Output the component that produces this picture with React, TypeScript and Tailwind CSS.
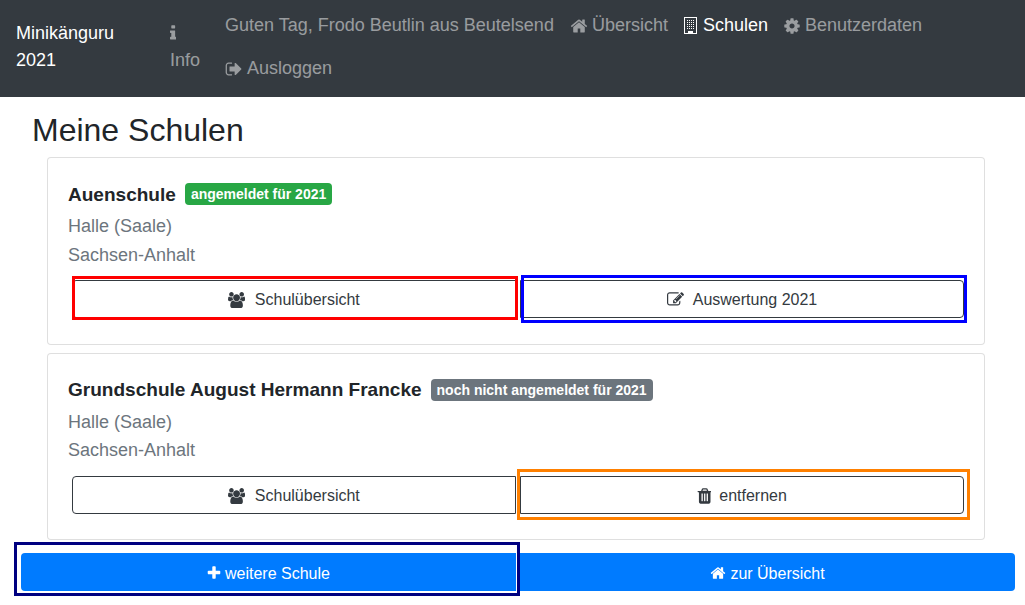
import React from 'react';

type IconProps = { d: string; w?: number; x?: number; size: number; className?: string };

const Icon: React.FC<IconProps> = ({ d, w = 1792, x = 0, size, className }) => (
  <svg viewBox={`${x} 0 ${w} 1792`} width={(size * w) / 1792} height={size} fill="currentColor" className={`inline-block shrink-0 ${className || ''}`}>
    <path d={d} />
  </svg>
);

const HOME = 'M1472 992v480q0 26-19 45t-45 19h-384v-384h-256v384h-384q-26 0-45-19t-19-45v-480q0-1 .5-3t.5-3l575-474 575 474q1 2 1 6zm223-69l-62 74q-8 9-21 11h-3q-13 0-21-7l-692-577-692 577q-12 8-24 7-13-2-21-11l-62-74q-8-10-7-23.500t11-21.500l719-599q32-26 76-26t76 26l244 204v-195q0-14 9-23t23-9h192q14 0 23 9t9 23v408l219 182q10 8 11 21.500t-7 23.500z';
const USERS = 'M593 896q-162 5-265 128h-134q-82 0-138-40.500t-56-118.500q0-353 124-353 6 0 43.500 21t97.500 42.500 119 21.500q67 0 133-23-5 37-5 66 0 139 81 256zm1071 637q0 120-73 189.500t-194 69.500h-874q-121 0-194-69.500t-73-189.500q0-53 3.500-103.500t14-109 26.500-108.500 43-97.500 62-81 85.500-53.500 111.500-20q10 0 43 21.500t73 48 107 48 135 21.500 135-21.500 107-48 73-48 43-21.500q61 0 111.500 20t85.500 53.500 62 81 43 97.500 26.500 108.500 14 109 3.500 103.500zm-1024-1277q0 106-75 181t-181 75-181-75-75-181 75-181 181-75 181 75 75 181zm704 384q0 159-112.500 271.500t-271.500 112.500-271.500-112.500-112.500-271.500 112.500-271.500 271.500-112.500 271.500 112.500 112.500 271.500zm576 225q0 78-56 118.500t-138 40.500h-134q-103-123-265-128 81-117 81-256 0-29-5-66 66 23 133 23 59 0 119-21.500t97.500-42.500 43.500-21q124 0 124 353zm-128-609q0 106-75 181t-181 75-181-75-75-181 75-181 181-75 181 75 75 181z';
const COG = 'M1152 896q0-106-75-181t-181-75-181 75-75 181 75 181 181 75 181-75 75-181zm512-109v222q0 12-8 23t-20 13l-185 28q-19 54-39 91 35 50 107 138 10 12 10 25t-9 23q-27 37-99 108t-94 71q-12 0-26-9l-138-108q-44 23-91 38-16 136-29 186-7 28-36 28h-222q-14 0-24.500-8.500t-11.500-21.500l-28-184q-49-16-90-37l-141 107q-10 9-25 9-14 0-25-11-126-114-165-168-7-10-7-23 0-12 8-23 15-21 51-66.500t54-70.500q-27-50-41-99l-183-27q-13-2-21-12.500t-8-23.500v-222q0-12 8-23t19-13l186-28q14-46 39-92-40-57-107-138-10-12-10-24 0-10 9-23 26-36 98.500-107.500t94.500-71.500q13 0 26 10l138 107q44-23 91-38 16-136 29-186 7-28 36-28h222q14 0 24.500 8.500t11.500 21.500l28 184q49 16 90 37l142-107q9-9 24-9 13 0 25 10 129 119 165 170 7 8 7 22 0 12-8 23-15 21-51 66.500t-54 70.500q26 50 41 98l183 28q13 2 21 12.500t8 23.500z';
const PLUS = 'M1600 736v192q0 40-28 68t-68 28h-416v416q0 40-28 68t-68 28h-192q-40 0-68-28t-28-68v-416h-416q-40 0-68-28t-28-68v-192q0-40 28-68t68-28h416v-416q0-40 28-68t68-28h192q40 0 68 28t28 68v416h416q40 0 68 28t28 68z';
const SIGN_OUT = 'M704 1440q0 4 1 20t.5 26.500-3 23.500-10 19.500-20.500 6.500h-320q-119 0-203.500-84.500t-84.500-203.500v-704q0-119 84.500-203.500t203.500-84.500h320q13 0 22.500 9.500t9.500 22.500q0 4 1 20t.5 26.500-3 23.500-10 19.500-20.500 6.500h-320q-66 0-113 47t-47 113v704q0 66 47 113t113 47h312l11.500 1 11.500 3 8 5.500 7 9 2 13.500zm928-544q0 26-19 45l-544 544q-19 19-45 19t-45-19-19-45v-288h-448q-26 0-45-19t-19-45v-384q0-26 19-45t45-19h448v-288q0-26 19-45t45-19 45 19l544 544q19 19 19 45z';
const INFO = 'M1216 1344v128q0 26-19 45t-45 19h-512q-26 0-45-19t-19-45v-128q0-26 19-45t45-19h64v-384h-64q-26 0-45-19t-19-45v-128q0-26 19-45t45-19h384q26 0 45 19t19 45v576h64q26 0 45 19t19 45zm-128-1152v192q0 26-19 45t-45 19h-256q-26 0-45-19t-19-45v-192q0-26 19-45t45-19h256q26 0 45 19t19 45z';
const EDIT = 'M888 1184l116-116-152-152-116 116v56h96v96h56zm440-720q-16-16-33 1l-350 350q-17 17-1 33t33-1l350-350q17-17 1-33zm80 594v190q0 119-84.500 203.500t-203.500 84.500h-832q-119 0-203.500-84.500t-84.500-203.500v-832q0-119 84.500-203.500t203.500-84.500h832q63 0 117 25 15 7 18 23 3 17-9 29l-49 49q-14 14-32 8-23-6-45-6h-832q-66 0-113 47t-47 113v832q0 66 47 113t113 47h832q66 0 113-47t47-113v-126q0-13 9-22l64-64q15-15 35-7t20 29zm-96-738l288 288-672 672h-288v-288zm444 132l-92 92-288-288 92-92q28-28 68-28t68 28l152 152q28 28 28 68t-28 68z';
const TRASH = 'M704 1376v-704q0-14-9-23t-23-9h-64q-14 0-23 9t-9 23v704q0 14 9 23t23 9h64q14 0 23-9t9-23zm256 0v-704q0-14-9-23t-23-9h-64q-14 0-23 9t-9 23v704q0 14 9 23t23 9h64q14 0 23-9t9-23zm256 0v-704q0-14-9-23t-23-9h-64q-14 0-23 9t-9 23v704q0 14 9 23t23 9h64q14 0 23-9t9-23zm-544-992h448l-48-117q-7-9-17-11h-317q-10 2-17 11zm928 32v64q0 14-9 23t-23 9h-96v948q0 83-47 143.500t-113 60.500h-832q-66 0-113-63t-47-143v-942h-96q-14 0-23-9t-9-23v-64q0-14 9-23t23-9h309l70-167q15-37 54-63t79-26h320q40 0 79 26t54 63l70 167h309q14 0 23 9t9 23z';

const BuildingIcon = () => (
  <svg viewBox="0 0 15 17" width="15" height="17" fill="currentColor" className="inline-block shrink-0">
    <path fillRule="evenodd" d="M0 0h13v17H0zM1 1v15h3v-2h5v2h3V1z" />
    <path d="M3 3h1v1H3zM5 3h1v1H5zM7 3h1v1H7zM9 3h1v1H9zM3 5h1v1H3zM5 5h1v1H5zM7 5h1v1H7zM9 5h1v1H9zM3 7h1v1H3zM5 7h1v1H5zM7 7h1v1H7zM9 7h1v1H9zM3 9h1v1H3zM5 9h1v1H5zM7 9h1v1H7zM9 9h1v1H9zM3 11h1v1H3zM5 11h1v1H5zM7 11h1v1H7zM9 11h1v1H9z" />
  </svg>
);

const OutlineButton: React.FC<{ icon: React.ReactNode; label: string; mark?: React.ReactNode; className?: string }> = ({ icon, label, mark, className }) => (
  <div className="relative flex-1">
    <button className={`flex h-[38px] w-full items-center justify-center border border-[#343a40] bg-white pt-[2px] text-[16px] text-[#343a40] ${className || ''}`}>
      {icon}
      {label}
    </button>
    {mark}
  </div>
);

const SchoolCard: React.FC<{
  name: string;
  badge: string;
  badgeClass: string;
  left: React.ReactNode;
  right: React.ReactNode;
}> = ({ name, badge, badgeClass, left, right }) => (
  <div className="rounded-[4px] border border-black/[.125] bg-white px-[20px] pt-[21.6px] pb-[25.6px]">
    <div className="flex h-[29px] items-center gap-[9px]">
      <h5 className="text-[19.05px] leading-[23px] font-bold text-[#212529]">{name}</h5>
      <span className={`flex h-[22px] items-center rounded-[4px] px-[6px] pt-[1px] text-[14px] font-bold text-white ${badgeClass}`}>{badge}</span>
    </div>
    <p className="mt-[3.4px] text-[18px] leading-[28.8px] text-[#6c757d]">Halle (Saale)</p>
    <p className="text-[18px] leading-[28.8px] text-[#6c757d]">Sachsen-Anhalt</p>
    <div className="mt-[10.4px] flex gap-[4px] pl-[4px]">
      {left}
      {right}
    </div>
  </div>
);

const NavLink: React.FC<{ icon?: React.ReactNode; label: string; active?: boolean }> = ({ icon, label, active }) => (
  <a className={`flex h-[43px] items-center gap-[4px] ${active ? 'pr-[15px] text-white' : 'pr-[16px] text-white/50'}`}>
    {icon}
    {label}
  </a>
);

const UsersIcon = () => <Icon d={USERS} w={1920} size={16} className="mr-[9.5px]" />;

const App: React.FC = () => {
  return (
    <div className="h-[605px] w-full overflow-hidden bg-white font-['Liberation_Sans',Arial,sans-serif] text-[18px] leading-[27px]">
      <nav className="flex h-[97px] bg-[#343a40] pl-[16px]">
        <div className="flex w-[154px] shrink-0 items-center pb-[4px] text-white">
          <span className="w-[110px]">Minikänguru 2021</span>
        </div>
        <div className="flex w-[55px] shrink-0 flex-col justify-center pb-[4px] text-white/50">
          <span className="flex h-[27px] items-center">
            <Icon d={INFO} w={640} x={576} size={18} />
          </span>
          <span>Info</span>
        </div>
        <div className="flex flex-1 flex-wrap content-start pt-[4px]">
          <NavLink label="Guten Tag, Frodo Beutlin aus Beutelsend" />
          <NavLink icon={<Icon d={HOME} size={18} />} label="Übersicht" />
          <NavLink icon={<BuildingIcon />} label="Schulen" active />
          <NavLink icon={<Icon d={COG} size={18} />} label="Benutzerdaten" />
          <NavLink icon={<Icon d={SIGN_OUT} size={18} />} label="Ausloggen" />
        </div>
      </nav>

      <h2 className="mt-[14px] ml-[32px] text-[32px] leading-[38px] text-[#212529]">Meine Schulen</h2>

      <div className="mt-[8px] mr-[40px] ml-[47px] flex flex-col gap-[8px]">
        <SchoolCard
          name="Auenschule"
          badge="angemeldet für 2021"
          badgeClass="bg-[#28a745]"
          left={
            <OutlineButton
              icon={<UsersIcon />}
              label="Schulübersicht"
              className="rounded-l-[4px]"
              mark={<span className="absolute -top-[4px] -right-[2px] -bottom-[2px] left-0 border-[3px] border-[#ff0000]" />}
            />
          }
          right={
            <OutlineButton
              icon={<Icon d={EDIT} size={17} className="mr-[9px]" />}
              label="Auswertung 2021"
              className="rounded-r-[4px]"
              mark={<span className="absolute -top-[5px] -right-[3px] -bottom-[5px] left-[1px] border-[3px] border-[#0000ff]" />}
            />
          }
        />
        <SchoolCard
          name="Grundschule August Hermann Francke"
          badge="noch nicht angemeldet für 2021"
          badgeClass="bg-[#6c757d]"
          left={<OutlineButton icon={<UsersIcon />} label="Schulübersicht" className="rounded-l-[4px]" />}
          right={
            <OutlineButton
              icon={<Icon d={TRASH} w={1408} x={128} size={18} className="mr-[8px]" />}
              label="entfernen"
              className="rounded-r-[4px]"
              mark={<span className="absolute -top-[7px] -right-[6px] -bottom-[6px] -left-[3px] border-[3px] border-[#ff8000]" />}
            />
          }
        />
      </div>

      <div className="mt-[13px] mr-[10px] ml-[21px] flex gap-[4px] text-[16px] text-white">
        <div className="relative flex-1">
          <button className="flex h-[38px] w-full items-center justify-center gap-[3px] rounded-l-[4px] bg-[#007bff] pt-[2px] pr-[1px]">
            <Icon d={PLUS} size={16} />
            weitere Schule
          </button>
          <span className="absolute -top-[11px] -right-[4px] -bottom-[5px] -left-[7px] border-[3px] border-[#000080]" />
        </div>
        <button className="flex h-[38px] flex-1 items-center justify-center gap-[4px] rounded-r-[4px] bg-[#007bff] pt-[2px]">
          <Icon d={HOME} size={16} />
          zur Übersicht
        </button>
      </div>
    </div>
  );
};

export default App;
